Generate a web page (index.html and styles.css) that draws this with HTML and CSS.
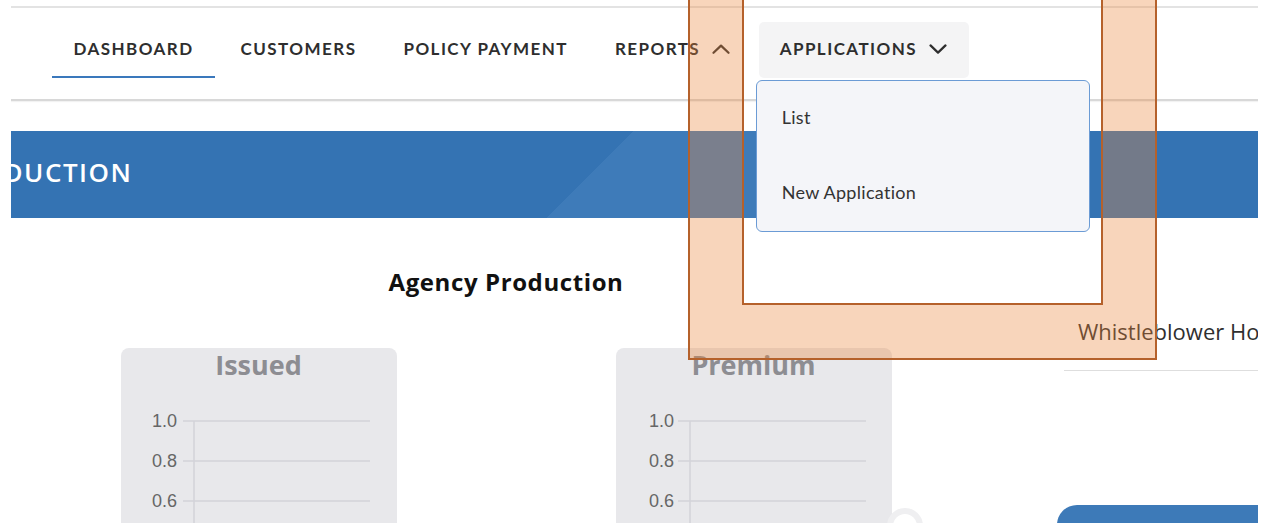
FILE: index.html
```html
<!DOCTYPE html>
<html lang="en">
<head>
<meta charset="utf-8">
<title>Agency Dashboard</title>
<link rel="stylesheet" href="styles.css">
</head>
<body>
<div class="page">
  <nav class="topnav">
    <ul class="menu">
      <li class="menu-item active">Dashboard</li>
      <li class="menu-item">Customers</li>
      <li class="menu-item">Policy Payment</li>
      <li class="menu-item">Reports
        <svg class="chev" viewBox="0 0 18 10" aria-hidden="true"><polyline points="1.5,8.8 9,1.6 16.5,8.8"/></svg>
      </li>
      <li class="menu-item open">Applications
        <svg class="chev" viewBox="0 0 18 10" aria-hidden="true"><polyline points="1.5,1.4 9,8.6 16.5,1.4"/></svg>
        <div class="dropdown">
          <a class="dropdown-item">List</a>
          <a class="dropdown-item">New Application</a>
        </div>
      </li>
    </ul>
  </nav>

  <header class="banner">
    <h1 class="banner-title">Production</h1>
  </header>

  <main class="content">
    <section class="production">
      <h2 class="section-title">Agency Production</h2>
      <div class="charts">
        <div class="chart-card">
          <h3 class="chart-title">Issued</h3>
          <svg class="chart" viewBox="0 0 276 170">
            <g class="grid">
              <line x1="62" y1="39" x2="249" y2="39"/>
              <line x1="62" y1="79" x2="249" y2="79"/>
              <line x1="62" y1="119" x2="249" y2="119"/>
              <line x1="62" y1="159" x2="249" y2="159"/>
              <line x1="73" y1="39" x2="73" y2="170"/>
            </g>
            <g class="ticks">
              <text x="56" y="45">1.0</text>
              <text x="56" y="85">0.8</text>
              <text x="56" y="125">0.6</text>
            </g>
          </svg>
        </div>
        <div class="chart-card">
          <h3 class="chart-title">Premium</h3>
          <svg class="chart" viewBox="0 0 276 170">
            <g class="grid">
              <line x1="62" y1="39" x2="250" y2="39"/>
              <line x1="62" y1="79" x2="250" y2="79"/>
              <line x1="62" y1="119" x2="250" y2="119"/>
              <line x1="62" y1="159" x2="250" y2="159"/>
              <line x1="74" y1="39" x2="74" y2="170"/>
            </g>
            <g class="ticks">
              <text x="58" y="45">1.0</text>
              <text x="58" y="85">0.8</text>
              <text x="58" y="125">0.6</text>
            </g>
          </svg>
        </div>
      </div>
    </section>

    <aside class="sidebar">
      <div class="side-link">Whistleblower Hotline</div>
      <div class="side-panel"></div>
    </aside>
  </main>
</div>

<span class="carousel-dot"></span>
<div class="focus-ring"></div>
</body>
</html>
```

FILE: styles.css
```css
html, body {
  margin: 0;
  padding: 0;
  background: #ffffff;
}

body {
  position: relative;
  height: 523px;
  overflow: hidden;
  font-family: Lato, "Open Sans", sans-serif;
  color: #2f2f2f;
}

.page {
  margin-left: 11px;
  width: 1247px;
  height: 523px;
  overflow: hidden;
  background: #ffffff;
}

/* ---------- top navigation ---------- */
.topnav {
  margin-top: 6px;
  border-top: 2px solid #e3e3e3;
  border-bottom: 2px solid #d8d8d8;
  box-shadow: 0 1px 1px rgba(0, 0, 0, 0.05);
  padding: 14px 0 21px 41px;
}

.menu {
  list-style: none;
  margin: 0;
  padding: 0;
  display: flex;
  gap: 4px;
}

.menu-item {
  position: relative;
  height: 56px;
  box-sizing: border-box;
  padding: 0 21.5px 3px;
  display: flex;
  align-items: center;
  gap: 12px;
  font-size: 17px;
  font-weight: 700;
  letter-spacing: 1.45px;
  text-transform: uppercase;
  color: #2e2e2e;
  white-space: nowrap;
}

.menu-item.active {
  border-bottom: 2px solid #3a78bc;
  padding-bottom: 1px;
}

.menu-item.open {
  background: #f4f4f5;
  border-radius: 5px;
  margin-left: 3px;
  padding-left: 21px;
}

.chev {
  width: 18px;
  height: 10px;
  fill: none;
  stroke: #2e2e2e;
  stroke-width: 2.2;
  stroke-linecap: round;
  stroke-linejoin: round;
}

.dropdown {
  position: absolute;
  top: 58px;
  left: -3px;
  width: 334px;
  box-sizing: border-box;
  background: #f4f5f9;
  border: 1px solid #6b9bd5;
  border-radius: 6px;
  z-index: 5;
  display: flex;
  flex-direction: column;
}

.dropdown-item {
  height: 75px;
  box-sizing: border-box;
  display: flex;
  align-items: center;
  padding: 0 0 4px 25px;
  font-size: 18px;
  font-weight: 400;
  letter-spacing: 0.3px;
  text-transform: none;
  color: #333333;
}

/* ---------- banner ---------- */
.banner {
  margin-top: 30px;
  height: 87px;
  overflow: hidden;
  background: linear-gradient(135deg,
    #3473b3 0, #3473b3 440px,
    #3e7bb9 440px, #3e7bb9 720px,
    #3473b3 720px);
}

.banner-title {
  margin: 0 0 0 -65px;
  font-family: "Open Sans", sans-serif;
  font-size: 26px;
  font-weight: 600;
  letter-spacing: 1.5px;
  line-height: 83px;
  text-transform: uppercase;
  color: #ffffff;
  white-space: nowrap;
}

/* ---------- content ---------- */
.content {
  display: grid;
  grid-template-columns: 990px 1fr;
}

.section-title {
  margin: 49px 0 0;
  text-align: center;
  font-family: "Open Sans", sans-serif;
  font-size: 24px;
  font-weight: 700;
  letter-spacing: 0.6px;
  line-height: 30px;
  color: #111111;
}

.charts {
  margin-top: 51px;
  display: flex;
  justify-content: space-around;
}

.chart-card {
  width: 276px;
  height: 200px;
  background: #e8e8eb;
  border-radius: 8px;
}

.chart-title {
  margin: 0;
  text-align: center;
  font-family: "Open Sans", sans-serif;
  font-size: 27px;
  font-weight: 700;
  line-height: 34px;
  color: #8d8d92;
}

.chart {
  display: block;
  width: 276px;
  height: 170px;
}

.chart .grid line {
  stroke: #d3d3d8;
  stroke-width: 1.5;
}

.chart .ticks text {
  font-family: "Liberation Sans", Arial, sans-serif;
  font-size: 18px;
  fill: #666666;
  text-anchor: end;
}

/* ---------- sidebar ---------- */
.sidebar {
  padding: 99px 0 0 56px;
  min-width: 0;
}

.side-link {
  margin-left: 7px;
  padding: 0 0 25px 14px;
  border-bottom: 1px solid #dedede;
  font-family: "Open Sans", sans-serif;
  font-size: 22px;
  line-height: 28px;
  color: #2f2f2f;
  white-space: nowrap;
  overflow: hidden;
}

.side-panel {
  margin-top: 134px;
  height: 60px;
  background: #3d7ab8;
  border-radius: 20px 0 0 0;
}

/* ---------- overlays ---------- */
.carousel-dot {
  position: absolute;
  left: 887px;
  top: 508px;
  width: 36px;
  height: 36px;
  box-sizing: border-box;
  border: 6px solid #efeff1;
  border-radius: 50%;
  background: #ffffff;
}

.focus-ring {
  position: absolute;
  left: 688px;
  top: -40px;
  width: 469px;
  height: 400px;
  box-sizing: border-box;
  border: 2px solid #b5612b;
  pointer-events: none;
  z-index: 10;
}

.focus-ring::before {
  content: "";
  position: absolute;
  inset: 0;
  border-style: solid;
  border-color: rgba(235, 135, 61, 0.35);
  border-width: 0 52px 53px 52px;
}

.focus-ring::after {
  content: "";
  position: absolute;
  left: 52px;
  right: 52px;
  top: -4px;
  bottom: 53px;
  border: 2px solid #b5612b;
  border-top: none;
}
```
